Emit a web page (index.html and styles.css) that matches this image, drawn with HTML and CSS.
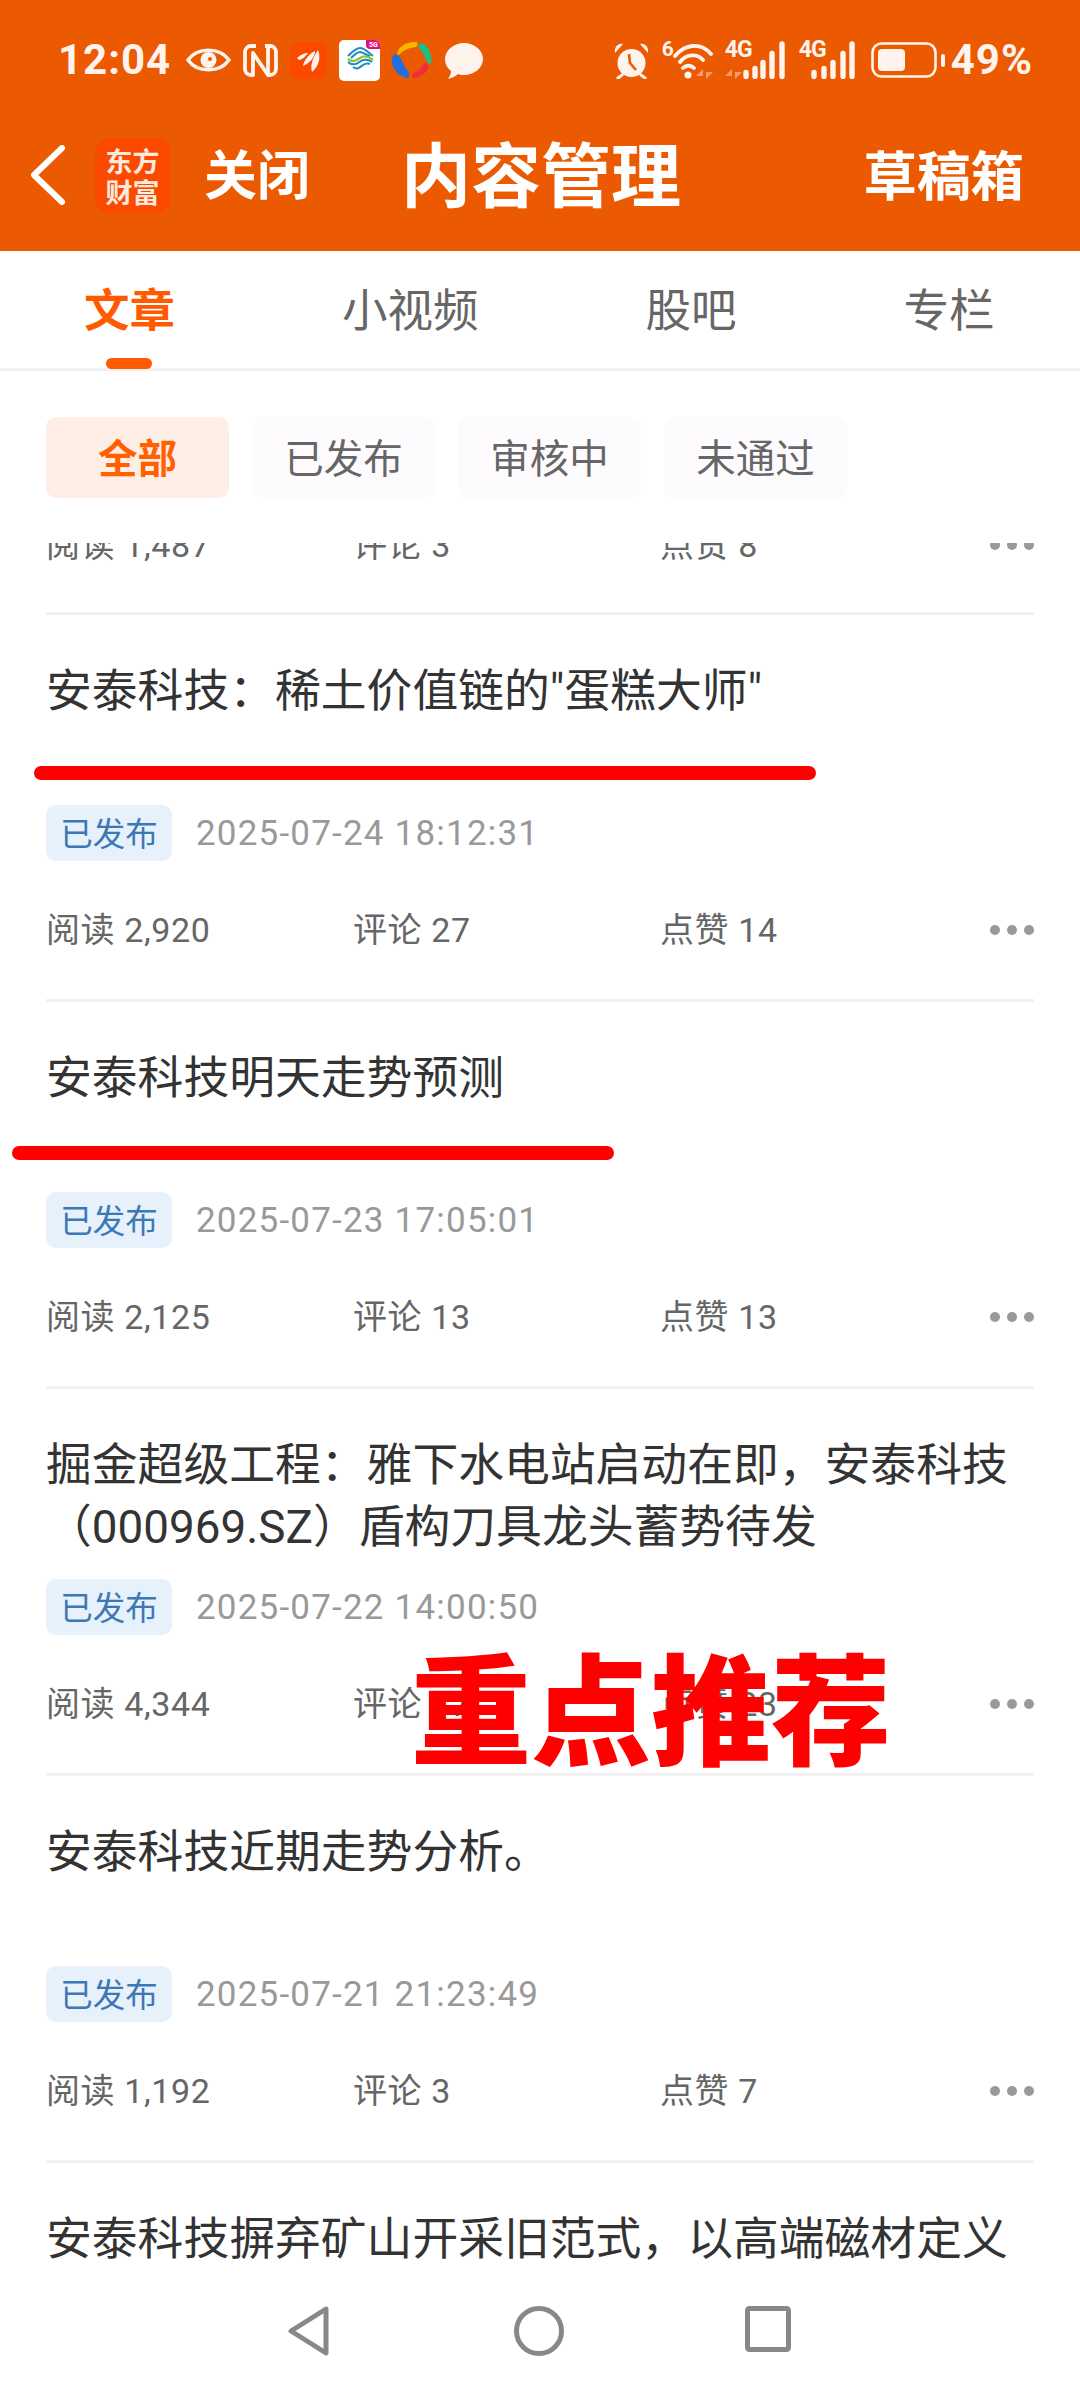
FILE: index.html
```html
<!DOCTYPE html>
<html lang="zh-CN">
<head>
    <meta charset="UTF-8">
    <meta name="viewport" content="width=device-width, initial-scale=1.0">
    <title>内容管理</title>
    <link rel="stylesheet" href="styles.css">
</head>
<body>
<div class="page">

    <header class="top">
        <div class="status">
            <div class="status-group">
                <span class="clock">12:04</span>
                <svg width="45" height="30" viewBox="0 0 45 30"><path d="M2 15C11 2 34 2 43 15C34 28 11 28 2 15Z" fill="none" stroke="#fff3ee" stroke-width="3.6"/><circle cx="22.5" cy="15" r="8" fill="#fff3ee"/><circle cx="24" cy="14" r="2" fill="#eb5900"/></svg>
                <svg width="35" height="35" viewBox="0 0 35 35"><path d="M13 3H8a6 6 0 0 0-6 6v17a6 6 0 0 0 6 6h2V10l15 22M22 3h5a6 6 0 0 1 6 6v17a6 6 0 0 1-6 6h-2V3" fill="none" stroke="#fff3ee" stroke-width="3.8" stroke-linejoin="round"/></svg>
                <svg width="37" height="37" viewBox="0 0 37 37"><rect width="37" height="37" rx="8" fill="#fa4a00"/><path d="M7 16c3-3 7-5 11-5-2 3-6 7-9 7zM13 24c1-6 6-12 12-15 0 6-5 12-12 15zM22 30c-2-7 1-15 6-22 3 7 1 16-6 22z" fill="#fff3ee"/></svg>
                <svg width="41" height="41" viewBox="0 0 41 41"><rect width="41" height="41" rx="5" fill="#fff"/><path d="M27 0h9a5 5 0 0 1 5 5v4H31a4 4 0 0 1-4-4z" fill="#e0117f"/><text x="30" y="7" class="badge-5g">5G</text><path d="M9 16C13 12 17 8 21 8C26 8 30 13 34 16M12 18C15 15 18 12 21 12C24 12 27 15 31 16" fill="none" stroke="#1f8ac0" stroke-width="2"/><path d="M9 19C14 23 18 20 21 18C25 15 29 16 34 20" fill="none" stroke="#8cc63f" stroke-width="2.4"/><path d="M9 22C13 26 18 24 22 21C26 19 30 20 33 22M14 27C18 30 20 28 24 25C27 23 29 23 31 24" fill="none" stroke="#1f8ac0" stroke-width="2"/></svg>
                <svg width="40" height="40" viewBox="0 0 40 40"><path d="M5 14C6 7 14 1 25 2c1 3 0 5-1 5C16 8 12 10 8 14c-1 1-3 1-3 0z" fill="#f7b500"/><path d="M26 6c0-2 3-3 6-2 5 3 8 11 7 20-2 1-4-2-6-7-1-3-4-6-7-11z" fill="#17c28a"/><path d="M34 23c3 2 3 6 0 9-3 3-8 6-12 6-2 0-2-3-1-5 3-1 6-2 8-5 1-2 3-5 5-5z" fill="#f02d3a"/><path d="M1 15c3-2 6 0 8 4 2 5 5 9 8 14 1 2 0 5-2 5C7 36 1 30 0 23c0-3 0-6 1-8z" fill="#1f6fe0"/></svg>
                <svg width="39" height="37" viewBox="0 0 39 37"><path d="M20 1c10 0 19 7 19 16s-9 16-19 16c-2 0-4 0-6-1-2 2-6 4-10 5 2-3 3-6 3-8C3 26 1 22 1 17 1 8 10 1 20 1z" fill="#fff3ee"/></svg>
            </div>
            <div class="status-group">
                <svg width="37" height="37" viewBox="0 0 37 37"><circle cx="18.5" cy="21" r="14" fill="#fff3ee"/><path d="M16 12l1 9 6 7" fill="none" stroke="#eb5900" stroke-width="2.6"/><path d="M2 11C1 5 5 1 10 2zM35 11c1-6-3-10-8-9z" fill="#fff3ee"/><path d="M9 33l-4 3M28 33l4 3" stroke="#fff3ee" stroke-width="3.2" stroke-linecap="round"/></svg>
                <div class="wifi">
                    <span class="net-six">6</span>
                    <svg width="51" height="38" viewBox="0 0 51 38"><path d="M13 15C22 4 38 0 49 13M18 21C24 13 35 12 41 19M21 27C24 24 29 24 32 27" fill="none" stroke="#fff3ee" stroke-width="3.8" stroke-linecap="round"/><circle cx="26" cy="34" r="3.5" fill="#fff3ee"/><path d="M41 38V28l-7 7h7zM44 28v10l7-7h-7z" fill="#fa9a6c"/></svg>
                </div>
                <div class="signal">
                    <span class="net-label">4G</span>
                    <svg width="62" height="38" viewBox="0 0 62 38"><path d="M7 38V28L0 35h7zM10 28v10l7-7h-7z" fill="#fa9a6c"/><path d="M21 31.500v4M30 27.500v8M38 21.500v14M47 12.500v23M57 3v32.500" stroke="#fff3ee" stroke-width="5.4" stroke-linecap="round"/></svg>
                </div>
                <div class="signal">
                    <span class="net-label">4G</span>
                    <svg width="57" height="38" viewBox="0 0 57 38"><path d="M15 31.500v4M25 27.500v8M34 21.500v14M44 12.500v23M53 3v32.500" stroke="#fff3ee" stroke-width="5.4" stroke-linecap="round"/></svg>
                </div>
                <div class="battery">
                    <svg width="75" height="36" viewBox="0 0 75 36"><rect x="1.5" y="1.5" width="63" height="33" rx="9" fill="none" stroke="#fff3ee" stroke-width="2.6"/><rect x="7" y="7" width="27" height="22" rx="4" fill="#fff3ee"/><rect x="70" y="12" width="4" height="13" rx="2" fill="#fff3ee"/></svg>
                    <span class="clock">49%</span>
                </div>
            </div>
        </div>

        <nav class="title-bar">
            <svg class="back" width="36" height="60" viewBox="0 0 36 60"><path d="M32 3L4 30l28 27" fill="none" stroke="#fff" stroke-width="6" stroke-linecap="round" stroke-linejoin="round"/></svg>
            <div class="brand">东方<br>财富</div>
            <span class="close">关闭</span>
            <h1 class="page-title">内容管理</h1>
            <span class="drafts">草稿箱</span>
        </nav>
    </header>

    <div class="tabs">
        <span class="tab tab-on">文章</span>
        <span class="tab">小视频</span>
        <span class="tab">股吧</span>
        <span class="tab">专栏</span>
    </div>

    <div class="filters">
        <span class="chip chip-on">全部</span>
        <span class="chip">已发布</span>
        <span class="chip">审核中</span>
        <span class="chip">未通过</span>
    </div>

    <div class="list">
        <div class="item item-tail">
            <div class="stats">
                <span>阅读 1,487</span><span>评论 3</span><span>点赞 8</span>
                <i class="more"><b></b><b></b><b></b></i>
            </div>
        </div>

        <div class="item">
            <div class="item-title">安泰科技&#xFF1A;稀土价值链的"蛋糕大师"</div>
            <div class="meta"><span class="state">已发布</span><span class="date">2025-07-24 18:12:31</span></div>
            <div class="stats">
                <span>阅读 2,920</span><span>评论 27</span><span>点赞 14</span>
                <i class="more"><b></b><b></b><b></b></i>
            </div>
        </div>

        <div class="item">
            <div class="item-title">安泰科技明天走势预测</div>
            <div class="meta"><span class="state">已发布</span><span class="date">2025-07-23 17:05:01</span></div>
            <div class="stats">
                <span>阅读 2,125</span><span>评论 13</span><span>点赞 13</span>
                <i class="more"><b></b><b></b><b></b></i>
            </div>
        </div>

        <div class="item">
            <div class="item-title">掘金超级工程&#xFF1A;雅下水电站启动在即&#xFF0C;安泰科技<br>&#xFF08;000969.SZ&#xFF09;盾构刀具龙头蓄势待发</div>
            <div class="meta"><span class="state">已发布</span><span class="date">2025-07-22 14:00:50</span></div>
            <div class="stats">
                <span>阅读 4,344</span><span>评论 17</span><span>点赞 23</span>
                <i class="more"><b></b><b></b><b></b></i>
            </div>
        </div>

        <div class="item">
            <div class="item-title">安泰科技近期走势分析。</div>
            <div class="meta"><span class="state">已发布</span><span class="date">2025-07-21 21:23:49</span></div>
            <div class="stats">
                <span>阅读 1,192</span><span>评论 3</span><span>点赞 7</span>
                <i class="more"><b></b><b></b><b></b></i>
            </div>
        </div>

        <div class="item">
            <div class="item-title">安泰科技摒弃矿山开采旧范式&#xFF0C;以高端磁材定义</div>
        </div>
    </div>

    <div class="navbar">
        <svg width="42" height="50" viewBox="0 0 42 50"><path d="M38 3L3 25l35 22z" fill="none" stroke="#888" stroke-width="5" stroke-linejoin="round"/></svg>
        <svg class="nav-home" width="50" height="50" viewBox="0 0 50 50"><circle cx="25" cy="25" r="22.5" fill="none" stroke="#888" stroke-width="5"/></svg>
        <svg width="46" height="46" viewBox="0 0 46 46"><rect x="2.5" y="2.5" width="41" height="41" rx="2" fill="none" stroke="#888" stroke-width="5"/></svg>
    </div>

    <!-- marker strokes and stamp on top of the list -->
    <div class="mark mark-first"></div>
    <div class="mark mark-second"></div>
    <div class="stamp">重点推荐</div>
</div>
</body>
</html>
```

FILE: styles.css
```css
* {
    box-sizing: border-box;
}

body {
    margin: 0;
    background: #fff;
    font-family: "Noto Sans CJK SC", "Noto Sans", sans-serif;
}

.page {
    position: relative;
    width: 1080px;
    height: 2388px;
    display: flex;
    flex-direction: column;
    overflow: hidden;
}

/* orange header */
.top {
    height: 251px;
    background: #eb5900;
    color: #fff;
    flex-shrink: 0;
}

.status {
    height: 110px;
    padding: 10px 47px 0 58px;
    display: flex;
    justify-content: space-between;
    align-items: center;
}

.status-group {
    display: flex;
    align-items: center;
    gap: 12px;
}

.status svg {
    display: block;
    flex-shrink: 0;
}

.badge-5g {
    font: 700 7px Roboto, sans-serif;
    fill: #fff;
}

.clock {
    font-family: Roboto, sans-serif;
    font-weight: 700;
    font-size: 42px;
    line-height: 40px;
    letter-spacing: 1px;
    color: #fff3ee;
}

.status-group > .clock {
    margin-right: 3px;
}

.wifi,
.signal {
    position: relative;
}

.net-six {
    position: absolute;
    left: 0;
    top: -4px;
    font: 700 21px/24px Roboto, sans-serif;
    color: #fff3ee;
}

.net-label {
    position: absolute;
    left: 0;
    top: -3px;
    font: 700 23px/24px Roboto, sans-serif;
    letter-spacing: -1px;
    color: #fff3ee;
}

.battery {
    display: flex;
    align-items: center;
    gap: 5px;
    margin-left: 3px;
}

.title-bar {
    height: 130px;
    padding: 0 56px 0 30px;
    display: flex;
    align-items: center;
}

.brand {
    width: 75px;
    height: 75px;
    margin-left: 29px;
    border-radius: 14px;
    background: #fa4a00;
    color: #ffe8dc;
    font-size: 27px;
    line-height: 31px;
    font-weight: 700;
    text-align: center;
    padding-top: 7px;
}

.close {
    margin: 0 0 6px 34px;
    font-size: 53px;
    font-weight: 700;
}

.page-title {
    margin: 0 0 6px 91px;
    font-size: 70px;
    font-weight: 700;
    line-height: 90px;
}

.drafts {
    margin: 0 0 6px auto;
    font-size: 53.5px;
    font-weight: 700;
}

/* tab strip */
.tabs {
    position: relative;
    height: 120px;
    padding: 0 0 6px 84px;
    display: flex;
    align-items: center;
    gap: 167px;
    border-bottom: 3px solid #f0f0f0;
    flex-shrink: 0;
}

.tab {
    position: relative;
    font-size: 45.5px;
    color: #666;
    white-space: nowrap;
}

.tab-on {
    color: #ff5a00;
    font-weight: 700;
}

.tab-on::after {
    content: "";
    position: absolute;
    left: 22px;
    bottom: -29px;
    width: 46px;
    height: 11px;
    border-radius: 6px;
    background: #ff5a00;
}

/* filter chips */
.filters {
    height: 172px;
    padding: 46px 0 0 46px;
    display: flex;
    align-items: flex-start;
    gap: 23px;
    flex-shrink: 0;
}

.chip {
    width: 183px;
    height: 81px;
    border-radius: 10px;
    background: #fdfbfd;
    color: #666;
    font-size: 39.5px;
    line-height: 78px;
    text-align: center;
}

.chip-on {
    background: #ffeee6;
    color: #ff6000;
    font-weight: 700;
}

/* article list */
.list {
    flex: 1;
    min-height: 0;
    overflow: hidden;
    padding: 0 46px;
}

.item {
    height: 387px;
    padding-top: 46px;
    border-bottom: 3px solid #f0f0f0;
}

.item-tail {
    height: 98px;
    margin-top: -26px;
    padding-top: 0;
}

.item-title {
    height: 124px;
    font-family: Roboto, "Noto Sans CJK SC", sans-serif;
    font-size: 45.8px;
    line-height: 62px;
    color: #333;
    white-space: nowrap;
}

.meta {
    height: 56px;
    margin-top: 20px;
    display: flex;
    align-items: center;
    gap: 24px;
}

.state {
    width: 126px;
    height: 56px;
    border-radius: 10px;
    background: #e6f1fc;
    color: #3c78b4;
    font-size: 32.5px;
    line-height: 54px;
    text-align: center;
}

.date {
    font-family: Roboto, sans-serif;
    font-size: 35px;
    letter-spacing: 1.2px;
    color: #999;
}

.stats {
    position: relative;
    height: 50px;
    margin-top: 41px;
    display: flex;
    align-items: center;
    font-family: Roboto, "Noto Sans CJK SC", sans-serif;
    font-size: 34px;
    letter-spacing: 0.6px;
    color: #666;
}

.item-tail .stats {
    margin-top: 0;
}

.stats span {
    width: 307px;
}

.more {
    position: absolute;
    right: 0;
    top: 23px;
    display: flex;
    gap: 7px;
}

.more b {
    width: 10px;
    height: 10px;
    border-radius: 50%;
    background: #999;
}

/* system navigation */
.navbar {
    height: 108px;
    padding: 26px 289px 0 288px;
    display: flex;
    justify-content: space-between;
    align-items: flex-start;
    background: #fff;
    flex-shrink: 0;
}

.nav-home {
    margin-left: 3px;
}

/* overlays */
.mark {
    position: absolute;
    height: 14px;
    border-radius: 7px;
    background: #f00;
}

.mark-first {
    left: 34px;
    top: 766px;
    width: 782px;
}

.mark-second {
    left: 12px;
    top: 1146px;
    width: 602px;
}

.stamp {
    position: absolute;
    left: 411px;
    top: 1629px;
    font-size: 120px;
    line-height: 150px;
    font-weight: 900;
    color: #f00;
    white-space: nowrap;
}
```
